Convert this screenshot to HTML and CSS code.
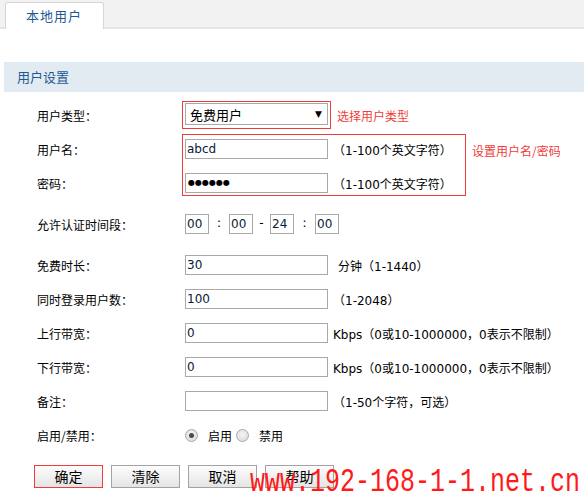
FILE: index.html
```html
<!DOCTYPE html>
<html lang="zh-CN">
<head>
<meta charset="utf-8">
<title>本地用户</title>
<link rel="stylesheet" href="styles.css">
</head>
<body>
<div class="tabbar"><div class="tab">本地用户</div></div>
<div class="section-title">用户设置</div>
<div class="form">
  <div class="row">
    <span class="lbl">用户类型：</span>
    <span class="select-wrap"><span class="select">免费用户<span class="arrow">▼</span></span></span>
    <span class="annot annot-near">选择用户类型</span>
  </div>
  <div class="group">
    <div class="row">
      <span class="lbl">用户名：</span>
      <span class="field">abcd</span>
      <span class="hint">（1-100个英文字符）</span>
    </div>
    <div class="row">
      <span class="lbl">密码：</span>
      <span class="field pwd">●●●●●●</span>
      <span class="hint">（1-100个英文字符）</span>
    </div>
    <div class="group-box"></div>
    <span class="annot group-note">设置用户名/密码</span>
  </div>
  <div class="row row-time">
    <span class="lbl">允许认证时间段：</span>
    <span class="field small">00</span><span class="sep sep1">:</span><span class="field small">00</span><span class="sep sep2">-</span><span class="field small">24</span><span class="sep sep3">:</span><span class="field small">00</span>
  </div>
  <div class="row row-free">
    <span class="lbl">免费时长：</span>
    <span class="field">30</span>
    <span class="hint hint-wide">分钟（1-1440）</span>
  </div>
  <div class="row">
    <span class="lbl">同时登录用户数：</span>
    <span class="field">100</span>
    <span class="hint">（1-2048）</span>
  </div>
  <div class="row">
    <span class="lbl">上行带宽：</span>
    <span class="field">0</span>
    <span class="hint">Kbps（0或10-1000000，0表示不限制）</span>
  </div>
  <div class="row">
    <span class="lbl">下行带宽：</span>
    <span class="field">0</span>
    <span class="hint">Kbps（0或10-1000000，0表示不限制）</span>
  </div>
  <div class="row">
    <span class="lbl">备注：</span>
    <span class="field"></span>
    <span class="hint">（1-50个字符，可选）</span>
  </div>
  <div class="row">
    <span class="lbl">启用/禁用：</span>
    <span class="radio checked"></span><span class="radio-text">启用</span>
    <span class="radio"></span><span class="radio-text">禁用</span>
  </div>
  <div class="buttons">
    <span class="btn btn-ok">确定</span>
    <span class="btn">清除</span>
    <span class="btn">取消</span>
    <span class="btn">帮助</span>
  </div>
</div>
<div class="watermark">www.192-168-1-1.net.cn</div>
</body>
</html>
```
FILE: styles.css
```css
* { box-sizing: border-box; }
body {
  margin: 0;
  width: 584px;
  height: 499px;
  overflow: hidden;
  position: relative;
  background: #fff;
  color: #000;
  font-family: "DejaVu Sans", "Noto Sans CJK SC", sans-serif;
  font-size: 12px;
}
.tabbar {
  height: 29px;
  background: #f2f2f2;
  border-bottom: 2px solid #e6e6e6;
  display: flex;
  align-items: flex-end;
}
.tab {
  margin-left: 5px;
  margin-bottom: -2px;
  width: 99px;
  height: 27px;
  background: #fff;
  border: 1px solid #d6d6d6;
  border-bottom: none;
  border-radius: 3px 3px 0 0;
  padding-left: 20px;
  line-height: 26px;
  font-size: 13px;
  letter-spacing: 1px;
  color: #1d5a94;
  font-family: "Noto Sans CJK SC", sans-serif;
}
.section-title {
  margin: 33px 0 0 4px;
  height: 30px;
  line-height: 30px;
  background: #e2ebf2;
  padding-left: 13px;
  font-size: 13px;
  color: #1d5a94;
  font-family: "Noto Sans CJK SC", sans-serif;
}
.form {
  padding: 6px 0 0 37px;
}
.row {
  display: flex;
  align-items: center;
  height: 34px;
}
.lbl {
  width: 148px;
  flex: none;
  font-family: "Noto Sans CJK SC", sans-serif;
}
.select-wrap {
  margin-left: -3px;
  border: 1px solid #f03c3c;
  padding: 1px 2px 3px 2px;
}
.select {
  display: flex;
  align-items: center;
  justify-content: space-between;
  width: 143px;
  height: 22px;
  border: 1px solid #a9a9a9;
  padding: 0 5px 0 4px;
  font-size: 13px;
  font-family: "Noto Sans CJK SC", sans-serif;
}
.arrow {
  font-size: 9px;
  font-family: "DejaVu Sans", sans-serif;
}
.annot {
  color: #f03c3c;
  font-family: "Noto Sans CJK SC", sans-serif;
}
.annot-near { margin-left: 6px; }
.group { position: relative; }
.group-box {
  position: absolute;
  left: 145px;
  top: 2px;
  width: 284px;
  height: 62px;
  border: 1px solid #f03c3c;
}
.group-note {
  position: absolute;
  left: 435px;
  top: 10px;
}
.field {
  width: 143px;
  height: 20px;
  border: 1px solid #a9a9a9;
  padding-left: 1px;
  line-height: 18px;
  color: #0a1a3a;
  flex: none;
}
.field.pwd {
  font-size: 8px;
  letter-spacing: 0px;
  padding-left: 2px;
  color: #000;
}
.field.small { width: 24px; }
.sep {
  text-align: center;
  margin-top: -3px;
}
.sep1 { width: 20px; }
.sep2 { width: 17px; }
.sep3 { width: 21px; }
.row-time { margin-top: 7px; }
.row-free { margin-top: 7px; }
.hint { margin-left: 5px; }
.hint-wide { margin-left: 10px; }
.radio {
  width: 13px;
  height: 13px;
  border-radius: 50%;
  border: 1px solid #a8a8a8;
  background: radial-gradient(circle at 50% 40%, #f4f4f4, #d8d8d8);
  display: flex;
  align-items: center;
  justify-content: center;
  flex: none;
}
.radio.checked::after {
  content: "";
  width: 5px;
  height: 5px;
  border-radius: 50%;
  background: #4a4a4a;
}
.radio-text {
  margin: 0 4px 0 10px;
  font-family: "Noto Sans CJK SC", sans-serif;
}
.buttons {
  display: flex;
  gap: 8px;
  margin: 13px 0 0 -3px;
}
.btn {
  width: 69px;
  height: 23px;
  border: 1px solid #a3a3a3;
  background: linear-gradient(#fdfdfd, #e4e4e4);
  text-align: center;
  line-height: 21px;
  font-size: 14px;
  font-family: "Noto Sans CJK SC", sans-serif;
}
.btn-ok { border-color: #f03c3c; }
.watermark {
  position: absolute;
  left: 250px;
  top: 473px;
  font-family: "Liberation Mono", monospace;
  font-size: 25px;
  line-height: 28px;
  color: #ff1a1a;
  white-space: nowrap;
  transform: scaleY(1.3);
  transform-origin: 0 100%;
}
```
